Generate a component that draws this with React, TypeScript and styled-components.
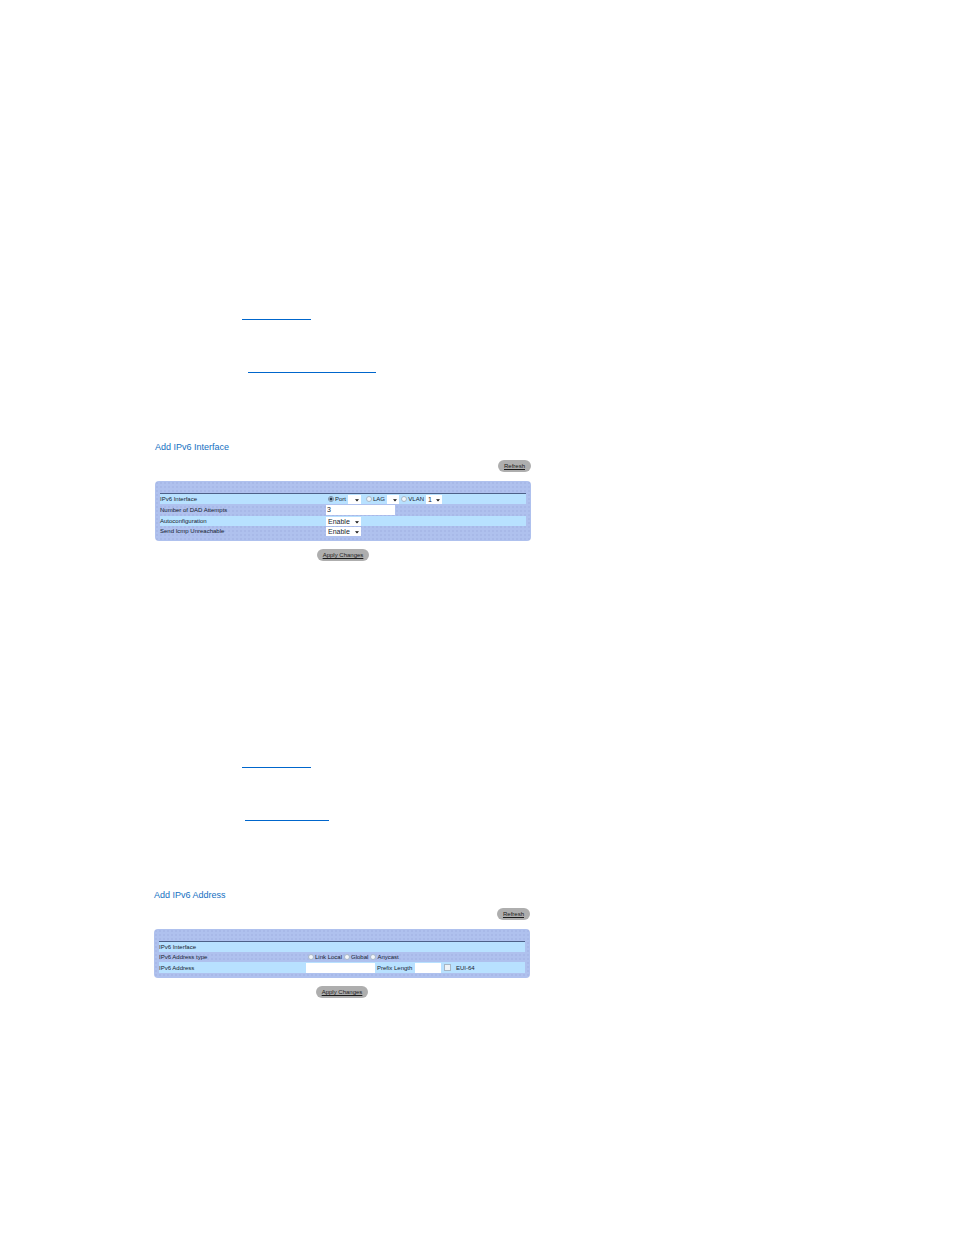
import React from "react";
import styled, { createGlobalStyle } from "styled-components";

const GlobalStyle = createGlobalStyle`
  *, *::before, *::after { box-sizing: border-box; }
  body {
    margin: 0;
    background: #fff;
    color: #141c30;
    font-family: "Liberation Sans", Arial, sans-serif;
    font-size: 6px;
    line-height: 10px;
  }
`;

const Page = styled.main`
  padding: 319px 24px 236px 154px;
`;

const References = styled.nav`
  display: flex;
  flex-direction: column;
  align-items: flex-start;
  gap: 52px;
  margin-left: 88px;
  margin-bottom: 68px;
`;

const ReferenceLink = styled.a<{ $width: number; $indent?: number }>`
  display: block;
  width: ${(p) => p.$width}px;
  max-width: 100%;
  height: 1px;
  margin-left: ${(p) => p.$indent ?? 0}px;
  background: #0066cc;
`;

const Form = styled.form<{ $indent?: number; $after?: number }>`
  display: flex;
  flex-direction: column;
  max-width: 376px;
  margin: 0 0 ${(p) => p.$after ?? 0}px ${(p) => p.$indent ?? 0}px;
`;

const Title = styled.h2`
  margin: 0 0 7px;
  color: #1470c2;
  font-size: 9px;
  font-weight: 400;
  line-height: 12px;
`;

const PillButton = styled.button<{ $align: "center" | "flex-end" }>`
  align-self: ${(p) => p.$align};
  height: 12px;
  padding: 0 6px;
  border: 0;
  border-radius: 6px;
  background: #aeaeae;
  color: #1a1a1a;
  font: inherit;
  line-height: 12px;
  text-decoration: underline;
  cursor: pointer;
`;

const Panel = styled.div`
  margin: 9px 0 8px;
  padding: 12px 5px 5px;
  border-radius: 4px;
  background-color: #afc1ee;
  background-image: radial-gradient(circle, #a8b9e8 1px, transparent 1px);
  background-size: 4px 4px;
`;

const Rows = styled.div`
  border-top: 1px solid #4d6088;
`;

const Row = styled.div<{ $split: number; $light?: boolean; $height: number }>`
  display: grid;
  grid-template-columns: ${(p) => p.$split}px 1fr;
  align-items: center;
  height: ${(p) => p.$height}px;
  background-color: ${(p) => (p.$light ? "#b8e1ff" : "transparent")};
`;

const Caption = styled.label`
  white-space: nowrap;
`;

const Controls = styled.div`
  display: flex;
  align-items: center;
  height: 10px;
`;

const Option = styled.label<{ $width?: number }>`
  display: flex;
  align-items: center;
  justify-content: flex-end;
  gap: 1px;
  width: ${(p) => (p.$width ? `${p.$width}px` : "auto")};
  padding: 0 ${(p) => (p.$width ? 2 : 0)}px 0 ${(p) => (p.$width ? 0 : 2)}px;
  white-space: nowrap;
`;

const Radio = styled.input.attrs({ type: "radio" })`
  appearance: none;
  flex: none;
  width: 6px;
  height: 6px;
  margin: 0;
  border: 1px solid #a9b8c8;
  border-radius: 50%;
  background: #f2f6fa;

  &:checked {
    border-color: #7890a8;
    background: radial-gradient(circle, #24384f 1px, #dbe8f3 2px);
  }
`;

const CheckBox = styled.input.attrs({ type: "checkbox" })`
  appearance: none;
  flex: none;
  width: 7px;
  height: 7px;
  margin: 0 4px 0 1px;
  border: 1px solid #a6b6c4;
  background: #eef3f7;
`;

const TextBox = styled.input.attrs({ type: "text" })<{ $width: number }>`
  width: ${(p) => p.$width}px;
  height: 10px;
  padding: 0 1px;
  border: 0;
  background: #fff;
  color: inherit;
  font: inherit;
  font-size: 7px;
`;

const InlineCaption = styled.label<{ $width: number }>`
  width: ${(p) => p.$width}px;
  padding-left: 2px;
  white-space: nowrap;
`;

const SelectFrame = styled.span<{ $width: number }>`
  position: relative;
  width: ${(p) => p.$width}px;
  height: 9px;

  select {
    display: block;
    appearance: none;
    width: 100%;
    height: 9px;
    padding: 0 2px;
    border: 0;
    border-radius: 0;
    background: #fff;
    color: inherit;
    font: inherit;
    font-size: 7px;
    line-height: 9px;
  }

  svg {
    position: absolute;
    top: 4px;
    right: 2px;
    pointer-events: none;
  }
`;

type DropDownProps = { id?: string; label?: string; width: number; options: string[] };

function DropDown({ id, label, width, options }: DropDownProps) {
  return (
    <SelectFrame $width={width}>
      <select id={id} aria-label={label}>
        {options.map((o) => (
          <option key={o}>{o}</option>
        ))}
      </select>
      <svg width="4" height="3" viewBox="0 0 4 3" aria-hidden="true">
        <path d="M0 0.3h4L2 2.6z" fill="#111" />
      </svg>
    </SelectFrame>
  );
}

function InterfaceForm() {
  return (
    <Form $indent={1} $after={206} onSubmit={(e) => e.preventDefault()}>
      <Title>Add IPv6 Interface</Title>
      <PillButton type="button" $align="flex-end">Refresh</PillButton>
      <Panel>
        <Rows>
          <Row $split={166} $height={10} $light role="radiogroup" aria-label="IPv6 Interface">
            <span>IPv6 Interface</span>
            <Controls>
              <Option $width={22}><Radio name="interface" defaultChecked />Port</Option>
              <DropDown label="Port number" width={13} options={[""]} />
              <Option $width={26}><Radio name="interface" />LAG</Option>
              <DropDown label="LAG number" width={12} options={[""]} />
              <Option $width={27}><Radio name="interface" />VLAN</Option>
              <DropDown label="VLAN number" width={16} options={["1"]} />
            </Controls>
          </Row>
          <Row $split={166} $height={12}>
            <Caption htmlFor="dad">Number of DAD Attempts</Caption>
            <Controls><TextBox id="dad" $width={69} defaultValue="3" /></Controls>
          </Row>
          <Row $split={166} $height={10} $light>
            <Caption htmlFor="auto">Autoconfiguration</Caption>
            <DropDown id="auto" width={35} options={["Enable", "Disable"]} />
          </Row>
          <Row $split={166} $height={10}>
            <Caption htmlFor="icmp">Send Icmp Unreachable</Caption>
            <DropDown id="icmp" width={35} options={["Enable", "Disable"]} />
          </Row>
        </Rows>
      </Panel>
      <PillButton type="submit" $align="center">Apply Changes</PillButton>
    </Form>
  );
}

function AddressForm() {
  return (
    <Form onSubmit={(e) => e.preventDefault()}>
      <Title>Add IPv6 Address</Title>
      <PillButton type="button" $align="flex-end">Refresh</PillButton>
      <Panel>
        <Rows>
          <Row $split={147} $height={10} $light>
            <span>IPv6 Interface</span>
          </Row>
          <Row $split={147} $height={10} role="radiogroup" aria-label="IPv6 Address type">
            <span>IPv6 Address type</span>
            <Controls>
              <Option><Radio name="type" />Link Local</Option>
              <Option><Radio name="type" />Global</Option>
              <Option><Radio name="type" />Anycast</Option>
            </Controls>
          </Row>
          <Row $split={147} $height={11} $light>
            <Caption htmlFor="address">IPv6 Address</Caption>
            <Controls>
              <TextBox id="address" $width={69} />
              <InlineCaption htmlFor="prefix" $width={40}>Prefix Length</InlineCaption>
              <TextBox id="prefix" $width={26} />
              <Option><CheckBox />EUI-64</Option>
            </Controls>
          </Row>
        </Rows>
      </Panel>
      <PillButton type="submit" $align="center">Apply Changes</PillButton>
    </Form>
  );
}

export default function App() {
  return (
    <>
      <GlobalStyle />
      <Page>
        <References aria-label="Interface references">
          <ReferenceLink href="#interfaces" aria-label="Interfaces" $width={69} />
          <ReferenceLink href="#add-interface" aria-label="Add IPv6 Interface" $width={128} $indent={6} />
        </References>
        <InterfaceForm />
        <References aria-label="Address references">
          <ReferenceLink href="#addresses" aria-label="Addresses" $width={69} />
          <ReferenceLink href="#add-address" aria-label="Add IPv6 Address" $width={84} $indent={3} />
        </References>
        <AddressForm />
      </Page>
    </>
  );
}
